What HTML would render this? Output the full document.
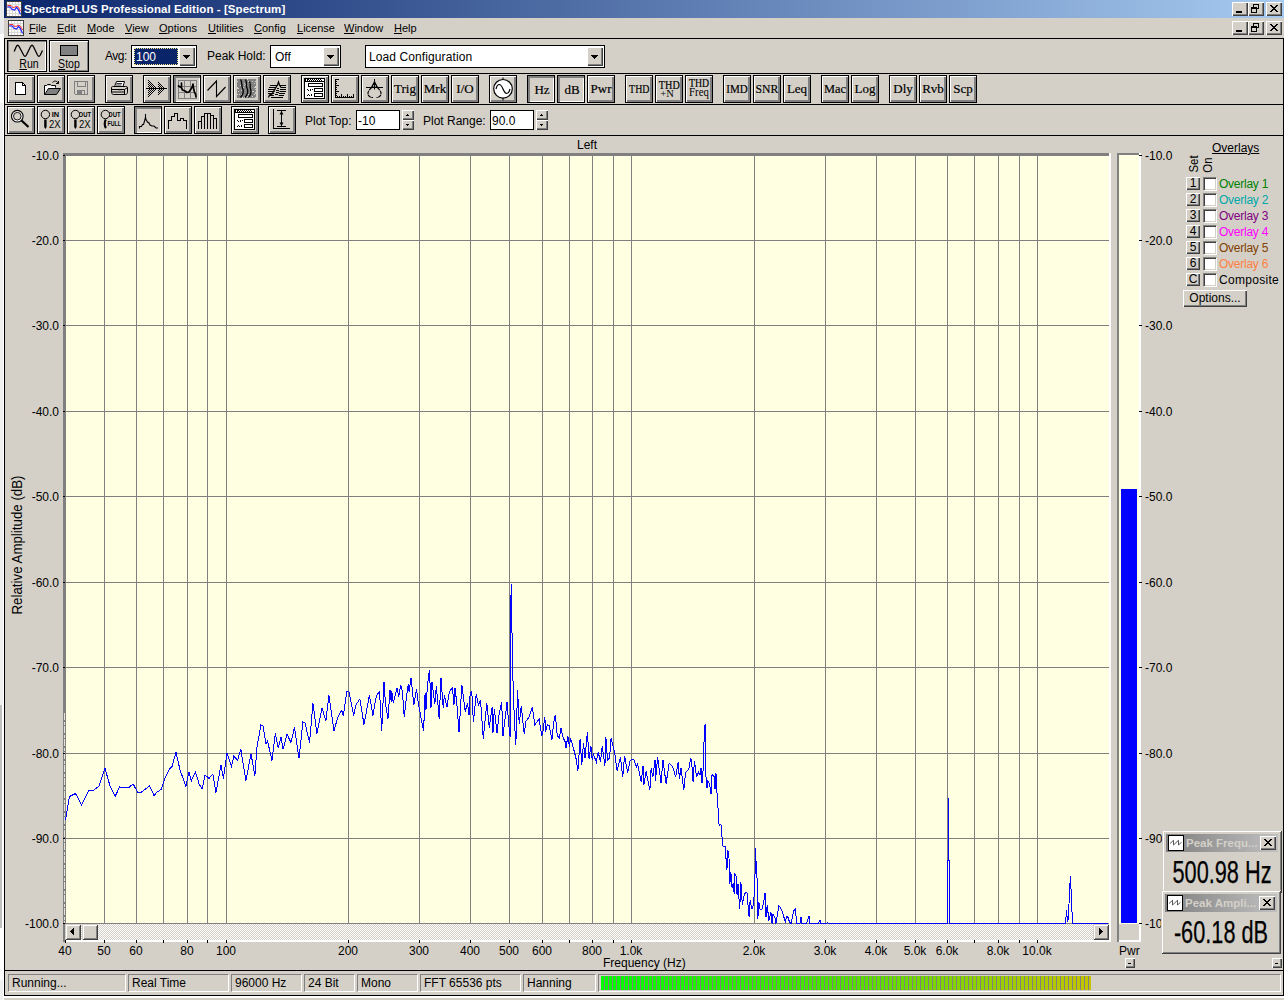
<!DOCTYPE html>
<html lang="en">
<head>
<meta charset="utf-8">
<title>SpectraPLUS Professional Edition - [Spectrum]</title>
<style>
html,body{margin:0;padding:0;}
body{width:1284px;height:1000px;overflow:hidden;background:#fff;font-family:"Liberation Sans",sans-serif;font-size:12px;color:#000;}
#root{position:relative;width:1284px;height:1000px;overflow:hidden;background:#fff;}
#root div,#root span,#root svg{position:absolute;box-sizing:border-box;white-space:nowrap;}
#root u{text-decoration:underline;}
.g{background:#d4d0c8;}
.bl{background:#000;}
/* toolbar buttons */
.tb{width:28px;height:28px;border:1px solid #000;background:#d4d0c8;box-shadow:inset 1px 1px #fff,inset -2px -2px #808080;}
.tb.dn{box-shadow:inset 2px 2px #808080,inset -1px -1px #fff;}
.tb svg{left:-1px;top:-1px;width:28px;height:28px;}
.tb .tx{left:0;top:0;width:26px;height:26px;text-align:center;font-family:"Liberation Serif",serif;font-size:13px;line-height:25px;-webkit-text-stroke:0.2px #000;}
.tb.dn .tx{left:1px;top:1px;}
.tb .tx2{left:0;top:0;width:26px;text-align:center;font-family:"Liberation Serif",serif;font-size:10px;line-height:9px;}
/* captions */
.cap{width:16px;height:14px;background:#d4d0c8;box-shadow:inset 1px 1px #fff,inset -1px -1px #404040,inset -2px -2px #808080;}
.cap svg{left:0;top:0;width:16px;height:14px;}
/* sunken field */
.sunk{background:#fff;border:1px solid #000;}
.dd{width:16px;background:#d4d0c8;box-shadow:inset 1px 1px #fff,inset -1px -1px #404040,inset -2px -2px #808080;}
.lbl{font-size:12px;line-height:14px;}
.sp{background:#d4d0c8;box-shadow:inset 1px 1px #fff,inset -1px -1px #404040,inset -2px -2px #808080;}
.sp.sb{box-shadow:inset 1px 1px #d4d0c8,inset -1px -1px #404040,inset 2px 2px #fff,inset -2px -2px #808080;}
.st{height:18px;top:974px;border:1px solid;border-color:#808080 #fff #fff #808080;font-size:12px;line-height:16px;padding-left:3px;}
.ax{font-size:12px;line-height:12px;}
.ov{font-size:12px;line-height:14px;left:1219px;}
.setb{left:1186px;width:14px;height:13px;background:#d4d0c8;box-shadow:inset 1px 1px #fff,inset -1px -1px #404040,inset -2px -2px #808080;font-size:12px;line-height:12px;text-align:center;}
.chk{left:1203px;width:13px;height:13px;background:#fff;border:1px solid;border-color:#808080 #fff #fff #808080;box-shadow:inset 1px 1px #404040,inset -1px -1px #d4d0c8;}
.m{top:22px;font-size:11px;line-height:13px;}
</style>
</head>
<body>
<div id="root">

<!-- desktop strip at left/bottom -->
<div style="left:0;top:0;width:4px;height:34px;background:#e8eaec"></div>
<div style="left:0;top:103px;width:3px;height:602px;background:#f0f0f0"></div>
<div style="left:0;top:705px;width:2px;height:223px;background:#c0c0c0"></div>
<div style="left:0;top:980px;width:3px;height:20px;background:#f0f0f0"></div>
<div style="left:4px;top:998px;width:1280px;height:2px;background:#d4d0c8"></div>
<!-- window -->
<div class="g" style="left:4px;top:0;width:1280px;height:996px;"></div>
<!-- title bar -->
<div style="left:4px;top:0;width:1280px;height:18px;background:linear-gradient(to right,#0a246a,#a6caf0);"></div>
<svg style="left:6px;top:1px;width:16px;height:16px" viewBox="0 0 16 16"><rect x="0.500" y="0.500" width="15" height="15" fill="#fff" stroke="#404040"/><path d="M3.500 1V15M6.500 1V15M9.500 1V15M12.500 1V15M1 3.500H15M1 6.500H15M1 9.500H15M1 12.500H15" stroke="#d8d8d8" stroke-width="1" fill="none"/><path d="M1.300 4.500H5L6.500 6.500L9 6L11 5L13.500 8L14.500 10" stroke="#ff3030" stroke-width="1" fill="none"/><path d="M1.300 5.800L4.500 6L5.500 8L8.500 9L10.500 6.500L12 8L13.500 11L14.500 13.500" stroke="#2020ff" stroke-width="1.200" fill="none"/></svg>
<div style="left:24px;top:2px;font-size:11.5px;line-height:14px;font-weight:bold;color:#fff;letter-spacing:0.070px" id="ttl">SpectraPLUS Professional Edition - [Spectrum]</div>
<div class="cap" style="left:1232px;top:2px"><svg viewBox="0 0 16 14" shape-rendering="crispEdges"><rect x="4" y="9" width="6" height="2" fill="#000"/></svg></div>
<div class="cap" style="left:1248px;top:2px"><svg viewBox="0 0 16 14" shape-rendering="crispEdges"><path d="M5 2H11V3H5zM5 3H6V5H5zM10 3H11V7H10zM9 6H10V7H9z M3 5H9V7H3z M3 7H4V11H3z M8 7H9V11H8z M3 10H9V11H3z" fill="#000"/></svg></div>
<div class="cap" style="left:1266px;top:2px"><svg viewBox="0 0 16 14" shape-rendering="crispEdges"><path d="M4 3h2v1h1v1h2v-1h1v-1h2v1h-1v1h-1v1h-1v1h1v1h1v1h1v1h-2v-1h-1v-1h-2v1h-1v1h-2v-1h1v-1h1v-1h1v-1h-1v-1h-1v-1h-1z" fill="#000"/></svg></div>
<!-- menu bar -->
<svg style="left:8px;top:20px;width:16px;height:16px" viewBox="0 0 16 16"><rect x="0.500" y="0.500" width="15" height="15" fill="#fff" stroke="#404040"/><path d="M3.500 1V15M6.500 1V15M9.500 1V15M12.500 1V15M1 3.500H15M1 6.500H15M1 9.500H15M1 12.500H15" stroke="#d8d8d8" stroke-width="1" fill="none"/><path d="M1.300 4.500H5L6.500 6.500L9 6L11 5L13.500 8L14.500 10" stroke="#ff3030" stroke-width="1" fill="none"/><path d="M1.300 5.800L4.500 6L5.500 8L8.500 9L10.500 6.500L12 8L13.500 11L14.500 13.500" stroke="#2020ff" stroke-width="1.200" fill="none"/></svg>
<div class="m" style="left:29px"><u>F</u>ile</div>
<div class="m" style="left:57px"><u>E</u>dit</div>
<div class="m" style="left:87px"><u>M</u>ode</div>
<div class="m" style="left:125px"><u>V</u>iew</div>
<div class="m" style="left:159px"><u>O</u>ptions</div>
<div class="m" style="left:208px"><u>U</u>tilities</div>
<div class="m" style="left:254px"><u>C</u>onfig</div>
<div class="m" style="left:297px"><u>L</u>icense</div>
<div class="m" style="left:344px"><u>W</u>indow</div>
<div class="m" style="left:394px"><u>H</u>elp</div>
<div class="cap" style="left:1232px;top:21px"><svg viewBox="0 0 16 14" shape-rendering="crispEdges"><rect x="4" y="9" width="6" height="2" fill="#000"/></svg></div>
<div class="cap" style="left:1248px;top:21px"><svg viewBox="0 0 16 14" shape-rendering="crispEdges"><path d="M5 2H11V3H5zM5 3H6V5H5zM10 3H11V7H10zM9 6H10V7H9z M3 5H9V7H3z M3 7H4V11H3z M8 7H9V11H8z M3 10H9V11H3z" fill="#000"/></svg></div>
<div class="cap" style="left:1266px;top:21px"><svg viewBox="0 0 16 14" shape-rendering="crispEdges"><path d="M4 3h2v1h1v1h2v-1h1v-1h2v1h-1v1h-1v1h-1v1h1v1h1v1h1v1h-2v-1h-1v-1h-2v1h-1v1h-2v-1h1v-1h1v-1h1v-1h-1v-1h-1v-1h-1z" fill="#000"/></svg></div>
<!-- toolbar frames -->
<div class="bl" style="left:4px;top:38px;width:1280px;height:1px"></div>
<div class="bl" style="left:4px;top:73px;width:1280px;height:1px"></div>
<div class="bl" style="left:4px;top:104px;width:1280px;height:1px"></div>
<div class="bl" style="left:4px;top:135px;width:1280px;height:1px"></div>
<div class="bl" style="left:4px;top:38px;width:1px;height:958px"></div>
<div class="bl" style="left:1283px;top:38px;width:1px;height:958px"></div>
<div class="bl" style="left:4px;top:970px;width:1280px;height:1px"></div>
<div class="bl" style="left:4px;top:995px;width:1280px;height:1px"></div>
<!-- row 1 -->
<div class="tb" style="left:7px;top:40px;width:40px;height:32px;box-shadow:inset 1px 1px #808080,inset -1px -1px #fff"><svg style="width:40px;height:32px" viewBox="0 0 40 32"><path d="M7.200 11.500L9.300 6.500Q10.700 4 12.100 6.500L16.600 15Q18 17.600 19.400 15L23.600 6.500Q25 4 26.400 6.500L30.500 15Q31.900 17.600 33.300 15L35.500 10.500" stroke="#000" stroke-width="1.300" fill="none"/></svg><div style="left:2px;top:17px;width:38px;text-align:center;font-size:12px;line-height:13px;transform:scaleX(0.88)"><u>R</u>un</div></div>
<div class="tb" style="left:49px;top:40px;width:40px;height:32px;box-shadow:inset 1px 1px #fff,inset -1px -1px #808080"><div style="left:10px;top:4px;width:18px;height:11px;background:#808080;border:1px solid #000"></div><div style="left:0;top:17px;width:38px;text-align:center;font-size:12px;line-height:13px;transform:scaleX(0.88)"><u>S</u>top</div></div>
<div class="lbl" style="left:105px;top:49px;letter-spacing:-0.5px">Avg:</div>
<div class="sunk" style="left:131px;top:45px;width:66px;height:23px"></div>
<div style="left:134px;top:48px;width:44px;height:17px;background:#0a246a;border:1px dotted #f0e080"></div>
<div class="lbl" style="left:136px;top:50px;color:#fff">100</div>
<div class="dd" style="left:179px;top:47px;height:19px"><svg style="left:0;top:0;width:16px;height:19px" viewBox="0 0 16 19" shape-rendering="crispEdges"><path d="M4 8h7v1h-1v1h-1v1h-1v1h-1v-1h-1v-1h-1v-1h-1z" fill="#000"/></svg></div>
<div class="lbl" style="left:207px;top:49px">Peak Hold:</div>
<div class="sunk" style="left:270px;top:45px;width:71px;height:23px"></div>
<div class="lbl" style="left:275px;top:50px">Off</div>
<div class="dd" style="left:323px;top:47px;height:19px"><svg style="left:0;top:0;width:16px;height:19px" viewBox="0 0 16 19" shape-rendering="crispEdges"><path d="M4 8h7v1h-1v1h-1v1h-1v1h-1v-1h-1v-1h-1v-1h-1z" fill="#000"/></svg></div>
<div class="sunk" style="left:365px;top:45px;width:240px;height:23px"></div>
<div class="lbl" style="left:369px;top:50px;letter-spacing:0.1px">Load Configuration</div>
<div class="dd" style="left:587px;top:47px;height:19px"><svg style="left:0;top:0;width:16px;height:19px" viewBox="0 0 16 19" shape-rendering="crispEdges"><path d="M4 8h7v1h-1v1h-1v1h-1v1h-1v-1h-1v-1h-1v-1h-1z" fill="#000"/></svg></div>

<!-- row 2 -->
<div class="tb" style="left:7px;top:75px"><svg viewBox="0 0 28 28" shape-rendering="crispEdges"><path d="M8.5 7.5H15.5L18.5 10.5V19.5H8.5Z" fill="#fff" stroke="#000"/><path d="M15.5 7.5V10.5H18.5" fill="none" stroke="#000"/></svg></div>
<div class="tb" style="left:37px;top:75px"><svg viewBox="0 0 28 28"><path d="M7.5 19.5V10.5H9.5L10.5 9.5H13.5L14.5 10.5H18.5V12.5" fill="none" stroke="#000"/><path d="M7.5 19.5L11.5 13.5H23.5L19.5 19.5Z" fill="#808080" stroke="#000"/><path d="M8 11H18V13H11L8 18Z" fill="#fff"/><path d="M15.5 7.5C17 5.5 20 5.5 21.5 8.5M21.5 8.5V6M21.5 8.5H19" fill="none" stroke="#000"/></svg></div>
<div class="tb" style="left:67px;top:75px"><svg viewBox="0 0 28 28" shape-rendering="crispEdges"><path d="M7.5 6.5H20.5V19.5H8.5L7.5 18.5Z" fill="#d4d0c8" stroke="#808080"/><path d="M10.5 6.5V11.5H18.5V6.5" fill="none" stroke="#808080"/><rect x="10" y="15" width="8" height="5" fill="#808080"/><rect x="15" y="16" width="2" height="3" fill="#d4d0c8"/></svg></div>
<div class="tb" style="left:105px;top:75px"><svg viewBox="0 0 28 28"><path d="M9.5 11.5L11.5 6.5H19.5L18 11.5" fill="#fff" stroke="#000"/><path d="M11.5 8.5H17M11 10H16.5" stroke="#000" stroke-width="0.8"/><path d="M6.5 12.5C6.5 11.5 7.5 11.5 8.5 11.5H20.5C21.5 11.5 22.5 11.5 22.5 12.5V17.5C22.5 18.5 21.5 19.5 20.5 19.5H8.5C7.5 19.5 6.5 18.5 6.5 17.5Z" fill="#d4d0c8" stroke="#000"/><path d="M6.5 14.5H19.5L22.5 12.5M19.5 14.5V19.5M7 17H19" stroke="#000" fill="none"/><rect x="13" y="15.5" width="4" height="1" fill="#808080"/></svg></div>
<div class="tb" style="left:143px;top:75px"><svg viewBox="0 0 28 28" shape-rendering="crispEdges"><path d="M5 5h1v1h-1zM5 7h1v1h-1zM5 9h1v1h-1zM5 11h1v1h-1zM5 13h1v1h-1zM5 15h1v1h-1zM5 17h1v1h-1zM5 19h1v1h-1zM5 21h1v1h-1zM6 6h1v1h-1zM6 8h1v1h-1zM6 10h1v1h-1zM6 12h1v1h-1zM6 14h1v1h-1zM6 16h1v1h-1zM6 18h1v1h-1zM6 20h1v1h-1zM7 7h1v1h-1zM7 9h1v1h-1zM7 11h1v1h-1zM7 13h1v1h-1zM7 15h1v1h-1zM7 17h1v1h-1zM7 19h1v1h-1zM8 8h1v1h-1zM8 10h1v1h-1zM8 12h1v1h-1zM8 14h1v1h-1zM8 16h1v1h-1zM8 18h1v1h-1zM9 9h1v1h-1zM9 11h1v1h-1zM9 13h1v1h-1zM9 15h1v1h-1zM9 17h1v1h-1zM10 10h1v1h-1zM10 12h1v1h-1zM10 14h1v1h-1zM10 16h1v1h-1zM11 11h1v1h-1zM11 13h1v1h-1zM11 15h1v1h-1zM12 12h1v1h-1zM12 14h1v1h-1zM13 13h1v1h-1zM15 7h1v1h-1zM15 9h1v1h-1zM15 11h1v1h-1zM15 13h1v1h-1zM15 15h1v1h-1zM15 17h1v1h-1zM15 19h1v1h-1zM16 8h1v1h-1zM16 10h1v1h-1zM16 12h1v1h-1zM16 14h1v1h-1zM16 16h1v1h-1zM16 18h1v1h-1zM17 9h1v1h-1zM17 11h1v1h-1zM17 13h1v1h-1zM17 15h1v1h-1zM17 17h1v1h-1zM18 10h1v1h-1zM18 12h1v1h-1zM18 14h1v1h-1zM18 16h1v1h-1zM19 11h1v1h-1zM19 13h1v1h-1zM19 15h1v1h-1zM20 12h1v1h-1zM20 14h1v1h-1zM21 13h1v1h-1z" fill="#000"/><rect x="3" y="13" width="21" height="1" fill="#000"/></svg></div>
<div class="tb dn" style="left:173px;top:75px"><svg viewBox="0 0 28 28"><rect x="5.500" y="5.500" width="18" height="18" fill="none" stroke="#808080"/><path d="M11.500 5.500V23.500M17.500 5.500V23.500M5.500 11.500H23.500M5.500 17.500H23.500" stroke="#808080" fill="none"/><path d="M5 10.500L7 12L8.500 12.500V8V13L9.500 15L12 16L14 17.500L16 17L18 14L19.500 11.500L20 9L20.500 13L21.500 17.500L22.500 19L23 22.500" fill="none" stroke="#000" stroke-width="1.700" stroke-linejoin="round"/></svg></div>
<div class="tb" style="left:203px;top:75px"><svg viewBox="0 0 28 28"><path d="M4.5 15.5L13.5 6V21.5L22.5 12" fill="none" stroke="#000" stroke-width="1.1"/></svg></div>
<div class="tb" style="left:233px;top:75px"><svg viewBox="0 0 28 28"><rect x="4" y="4" width="19" height="19" fill="#808080" shape-rendering="crispEdges"/><path d="M11 22h1v1h-1zM21 8h1v1h-1zM15 19h1v1h-1zM22 6h1v1h-1zM4 19h1v1h-1zM12 21h1v1h-1zM11 10h1v1h-1zM19 21h1v1h-1zM21 19h1v1h-1zM16 8h1v1h-1zM11 8h1v1h-1zM20 16h1v1h-1zM4 6h1v1h-1zM9 22h1v1h-1zM5 13h1v1h-1zM4 12h1v1h-1zM19 16h1v1h-1zM17 16h1v1h-1zM22 18h1v1h-1zM8 15h1v1h-1zM7 5h1v1h-1zM8 19h1v1h-1zM10 12h1v1h-1zM17 13h1v1h-1zM17 20h1v1h-1zM16 22h1v1h-1zM15 21h1v1h-1zM22 17h1v1h-1zM22 11h1v1h-1zM14 4h1v1h-1zM12 9h1v1h-1zM14 21h1v1h-1zM22 22h1v1h-1zM7 10h1v1h-1zM22 12h1v1h-1zM13 7h1v1h-1zM6 19h1v1h-1zM19 6h1v1h-1zM15 6h1v1h-1zM17 8h1v1h-1zM4 13h1v1h-1zM17 17h1v1h-1zM7 5h1v1h-1zM5 16h1v1h-1zM22 14h1v1h-1zM21 12h1v1h-1z" fill="#d4d0c8" shape-rendering="crispEdges"/><path d="M7.500 4.500C10 8 8 10 9.500 13C11 16 10.500 19 7.500 22.500M12.500 4.500C14.500 8 12.500 10 14 13C15.500 16 15 19 12 22.500M16.500 6.500C18 9 16.500 11 17.500 14C18.500 17 18 20 15.500 22.500" fill="none" stroke="#000" stroke-width="1.300"/></svg></div>
<div class="tb" style="left:263px;top:75px"><svg viewBox="0 0 28 28"><path d="M7 10.500H23M6 12.500H23M5 14.500H23M5 16.500H22.500M5 18.500H21.500M6.500 20.500H20.500M8 22.500H19.500" stroke="#000" fill="none" shape-rendering="crispEdges"/><path d="M10.500 22L11.500 17L13 13L14.500 10L15.500 7L16.500 10L17.500 12L16.800 15L16 18L15.500 21.500Z" fill="#d4d0c8"/><path d="M5.500 22.500L6.500 20L9 19L10.500 16.500L12.500 13L14.500 10L15.500 7L16.500 10L17.800 12" fill="none" stroke="#000" stroke-width="1.300"/><path d="M12 19.500H15M12.500 17.500H15.500M13 15.500H16M14 13.500H16" stroke="#000" stroke-width="1" fill="none" shape-rendering="crispEdges"/></svg></div>
<div class="tb" style="left:301px;top:75px"><svg viewBox="0 0 28 28" shape-rendering="crispEdges"><rect x="3" y="3" width="21" height="21" fill="#000"/><rect x="4" y="7" width="19" height="16" fill="#fff"/><rect x="5" y="4" width="1" height="2" fill="#fff"/><rect x="21" y="4" width="2" height="2" fill="#fff"/><path d="M7 5h1v1h-1zM8 4h1v1h-1zM9 5h1v1h-1zM10 4h1v1h-1zM11 5h1v1h-1zM12 4h1v1h-1zM13 5h1v1h-1zM14 4h1v1h-1zM15 5h1v1h-1zM16 4h1v1h-1zM17 5h1v1h-1zM18 4h1v1h-1zM19 5h1v1h-1zM20 4h1v1h-1z" fill="#fff"/><rect x="4" y="7" width="19" height="1" fill="#fff"/><rect x="4" y="7" width="19" height="0" fill="#000"/><rect x="7" y="8" width="15" height="4" fill="#000"/><rect x="8" y="9" width="13" height="2" fill="#fff"/><rect x="13" y="13" width="9" height="4" fill="#000"/><rect x="14" y="14" width="7" height="2" fill="#fff"/><rect x="13" y="18" width="9" height="4" fill="#000"/><rect x="14" y="19" width="7" height="2" fill="#fff"/><path d="M6 14h1v1h1v1h-1v-1h-1zM9 14h1v2h-1zM11 14h1v1h-1zM6 20h1v-1h1v1h1v1h-1v-1h-1v1h-1zM10 19h1v2h-1z" fill="#000"/></svg></div>
<div class="tb" style="left:331px;top:75px"><svg viewBox="0 0 28 28" shape-rendering="crispEdges"><rect x="4" y="4" width="1" height="19" fill="#000"/><rect x="4" y="22" width="19" height="1" fill="#000"/><rect x="4" y="4" width="4" height="1" fill="#000"/><rect x="4" y="6" width="2" height="1" fill="#000"/><rect x="4" y="8" width="2" height="1" fill="#000"/><rect x="4" y="10" width="4" height="1" fill="#000"/><rect x="4" y="12" width="2" height="1" fill="#000"/><rect x="4" y="14" width="2" height="1" fill="#000"/><rect x="4" y="16" width="4" height="1" fill="#000"/><rect x="4" y="18" width="2" height="1" fill="#000"/><rect x="4" y="20" width="2" height="1" fill="#000"/><rect x="6" y="21" width="1" height="2" fill="#000"/><rect x="8" y="21" width="1" height="2" fill="#000"/><rect x="10" y="19" width="1" height="4" fill="#000"/><rect x="12" y="21" width="1" height="2" fill="#000"/><rect x="14" y="21" width="1" height="2" fill="#000"/><rect x="16" y="19" width="1" height="4" fill="#000"/><rect x="18" y="21" width="1" height="2" fill="#000"/><rect x="20" y="21" width="1" height="2" fill="#000"/><rect x="22" y="19" width="1" height="4" fill="#000"/></svg></div>
<div class="tb" style="left:361px;top:75px"><svg viewBox="0 0 28 28"><path d="M13.500 4V14.500M5 12.500H22" fill="none" stroke="#000" stroke-width="1"/><path d="M13.500 5.500L9.800 12.500H17.200Z" fill="#000"/><rect x="12.100" y="10" width="0.800" height="1.800" fill="#d4d0c8"/><rect x="14.100" y="10" width="0.800" height="1.800" fill="#d4d0c8"/><path d="M10.500 12.500L8 15.500C6.500 17.500 6.500 20 8.500 21.500L10 22.500H12" fill="none" stroke="#000" stroke-width="1.200" stroke-dasharray="3.500 0.700"/><path d="M16.500 12.500L19 15.500C20.500 17.500 20.500 20 18.500 21.500L17 22.500H15.500" fill="none" stroke="#000" stroke-width="1.200" stroke-dasharray="3.500 0.700"/></svg></div>
<div class="tb" style="left:391px;top:75px"><div class="tx">Trig</div></div>
<div class="tb" style="left:421px;top:75px"><div class="tx">Mrk</div></div>
<div class="tb" style="left:451px;top:75px"><div class="tx">I/O</div></div>
<div class="tb" style="left:489px;top:75px"><svg viewBox="0 0 28 28"><path d="M14 2.500V5M14 22.500V25.500" stroke="#000"/><circle cx="14" cy="13.800" r="9.300" fill="#fff" stroke="#000" stroke-width="1.200"/><path d="M7 14C8.500 8 11.500 8 14 14C16.500 20 19.500 20 21 14" fill="none" stroke="#000" stroke-width="1.200"/></svg></div>
<div class="tb dn" style="left:527px;top:75px"><div class="tx">Hz</div></div>
<div class="tb dn" style="left:557px;top:75px"><div class="tx">dB</div></div>
<div class="tb" style="left:587px;top:75px"><div class="tx">Pwr</div></div>
<div class="tb" style="left:625px;top:75px"><div class="tx" style="transform:scaleX(0.76);-webkit-text-stroke:0.2px #000">THD</div></div>
<div class="tb" style="left:655px;top:75px"><div class="tx2" style="top:2px;font-size:13px;line-height:13px;transform:scaleX(0.78);-webkit-text-stroke:0.2px #000">THD</div><div class="tx2" style="left:-2px;top:13px;font-size:10.5px;line-height:10px">+N</div></div>
<div class="tb" style="left:685px;top:75px"><div class="tx2" style="top:1px;font-size:11.5px;line-height:12px;transform:scaleX(0.85);-webkit-text-stroke:0.2px #000">THD</div><div class="tx2" style="top:10px;font-size:12px;line-height:13px;transform:scaleX(0.9)">Freq</div></div>
<div class="tb" style="left:723px;top:75px"><div class="tx" style="transform:scaleX(0.85);-webkit-text-stroke:0.2px #000">IMD</div></div>
<div class="tb" style="left:753px;top:75px"><div class="tx" style="transform:scaleX(0.9);-webkit-text-stroke:0.2px #000">SNR</div></div>
<div class="tb" style="left:783px;top:75px"><div class="tx">Leq</div></div>
<div class="tb" style="left:821px;top:75px"><div class="tx" style="transform:scaleX(0.95);-webkit-text-stroke:0.2px #000">Mac</div></div>
<div class="tb" style="left:851px;top:75px"><div class="tx">Log</div></div>
<div class="tb" style="left:889px;top:75px"><div class="tx">Dly</div></div>
<div class="tb" style="left:919px;top:75px"><div class="tx">Rvb</div></div>
<div class="tb" style="left:949px;top:75px"><div class="tx">Scp</div></div>
<!-- row 3 -->
<div class="tb" style="left:7px;top:106px"><svg viewBox="0 0 28 28"><circle cx="10.300" cy="10.200" r="5.800" fill="#fff" stroke="#000" stroke-width="1.100"/><circle cx="10.300" cy="10.200" r="3.800" fill="#d4d0c8" stroke="#000" stroke-width="0.900"/><path d="M14.500 14.500L21.500 21" stroke="#000" stroke-width="2.200"/></svg></div>
<div class="tb" style="left:37px;top:106px"><svg viewBox="0 0 28 28"><text x="18.400" y="10.800" font-family="Liberation Sans,sans-serif" font-size="7" font-weight="bold" text-anchor="middle" textLength="7.400" lengthAdjust="spacingAndGlyphs">IN</text><circle cx="8.400" cy="8.500" r="4.200" fill="#d4d0c8" stroke="#000" stroke-width="1"/><path d="M7.200 13.500H9.600V21L8.400 23L7.200 21Z" fill="#000"/><text x="17.800" y="22.100" font-family="Liberation Sans,sans-serif" font-size="10.800" text-anchor="middle" textLength="11.600" lengthAdjust="spacingAndGlyphs">2X</text></svg></div>
<div class="tb" style="left:67px;top:106px"><svg viewBox="0 0 28 28"><text x="17.800" y="10.800" font-family="Liberation Sans,sans-serif" font-size="7" font-weight="bold" text-anchor="middle" textLength="12.500" lengthAdjust="spacingAndGlyphs">OUT</text><circle cx="8.400" cy="8.500" r="4.200" fill="#d4d0c8" stroke="#000" stroke-width="1"/><path d="M7.200 13.500H9.600V21L8.400 23L7.200 21Z" fill="#000"/><text x="17.800" y="22.100" font-family="Liberation Sans,sans-serif" font-size="10.800" text-anchor="middle" textLength="11.600" lengthAdjust="spacingAndGlyphs">2X</text></svg></div>
<div class="tb" style="left:97px;top:106px"><svg viewBox="0 0 28 28"><text x="17.300" y="10.800" font-family="Liberation Sans,sans-serif" font-size="7" font-weight="bold" text-anchor="middle" textLength="12.500" lengthAdjust="spacingAndGlyphs">OUT</text><circle cx="8.400" cy="8.500" r="4.200" fill="#d4d0c8" stroke="#000" stroke-width="1"/><path d="M8.800 13.500C7.200 16 7.500 20 9 22" stroke="#000" stroke-width="2.200" fill="none"/><text x="17.200" y="19.700" font-family="Liberation Sans,sans-serif" font-size="6.500" font-weight="bold" text-anchor="middle" textLength="13.500" lengthAdjust="spacingAndGlyphs">FULL</text></svg></div>
<div class="tb dn" style="left:134px;top:106px"><svg viewBox="0 0 28 28"><path d="M5.500 22.500V20.500H7.500L8.500 18.500H9.500L11 13.500L11.500 11V8V11L12 13.500L13.500 16L15 17L16 19L18 20H20L22 22H24" fill="none" stroke="#000" stroke-width="1.100"/></svg></div>
<div class="tb" style="left:164px;top:106px"><svg viewBox="0 0 28 28" shape-rendering="crispEdges"><path d="M4.500 23V14.500H7.500V10.500H10.500V7.500H13.500V14.500H16.500V12.500H19.500V14.500H22.500V23" fill="none" stroke="#000"/></svg></div>
<div class="tb" style="left:194px;top:106px"><svg viewBox="0 0 28 28" shape-rendering="crispEdges"><path d="M4.500 23V15.500H7.500V23M7.500 15.500V10.500H10.500V23M10.500 10.500V7.500H13.500V23M13.500 7.500H16.500V23M16.500 9.500H19.500V23M19.500 12.500H22.500V23" fill="none" stroke="#000"/></svg></div>
<div class="tb" style="left:231px;top:106px"><svg viewBox="0 0 28 28" shape-rendering="crispEdges"><rect x="3" y="3" width="21" height="21" fill="#000"/><rect x="4" y="7" width="19" height="16" fill="#fff"/><rect x="5" y="4" width="1" height="2" fill="#fff"/><rect x="21" y="4" width="2" height="2" fill="#fff"/><path d="M7 5h1v1h-1zM8 4h1v1h-1zM9 5h1v1h-1zM10 4h1v1h-1zM11 5h1v1h-1zM12 4h1v1h-1zM13 5h1v1h-1zM14 4h1v1h-1zM15 5h1v1h-1zM16 4h1v1h-1zM17 5h1v1h-1zM18 4h1v1h-1zM19 5h1v1h-1zM20 4h1v1h-1z" fill="#fff"/><rect x="4" y="7" width="19" height="1" fill="#fff"/><rect x="4" y="7" width="19" height="0" fill="#000"/><rect x="7" y="8" width="15" height="4" fill="#000"/><rect x="8" y="9" width="13" height="2" fill="#fff"/><rect x="13" y="13" width="9" height="4" fill="#000"/><rect x="14" y="14" width="7" height="2" fill="#fff"/><rect x="13" y="18" width="9" height="4" fill="#000"/><rect x="14" y="19" width="7" height="2" fill="#fff"/><path d="M6 14h1v1h1v1h-1v-1h-1zM9 14h1v2h-1zM11 14h1v1h-1zM6 20h1v-1h1v1h1v1h-1v-1h-1v1h-1zM10 19h1v2h-1z" fill="#000"/></svg></div>
<div class="tb" style="left:268px;top:106px"><svg viewBox="0 0 28 28" shape-rendering="crispEdges"><path d="M5.500 3V22.500H22" fill="none" stroke="#000"/><path d="M9 4.500H18M9 20.500H18M13.500 5V20" fill="none" stroke="#000"/><path d="M13.500 5L11.500 8.500H15.500ZM13.500 20L11.500 16.500H15.500Z" fill="#000" shape-rendering="auto"/></svg></div>
<div class="lbl" style="left:305px;top:114px">Plot Top:</div>
<div class="sunk" style="left:356px;top:110px;width:44px;height:20px"></div><div class="lbl" style="left:358px;top:114px">-10</div>
<div class="sp" style="left:402px;top:110px;width:12px;height:10px"><svg style="left:0;top:0;width:12px;height:10px" viewBox="0 0 12 10" shape-rendering="crispEdges"><path d="M5 4h1v1h1v1h-3v-1h1z" fill="#000"/></svg></div><div class="sp" style="left:402px;top:120px;width:12px;height:10px"><svg style="left:0;top:0;width:12px;height:10px" viewBox="0 0 12 10" shape-rendering="crispEdges"><path d="M4 4h3v1h-1v1h-1v-1h-1z" fill="#000"/></svg></div>
<div class="lbl" style="left:423px;top:114px">Plot Range:</div>
<div class="sunk" style="left:490px;top:110px;width:44px;height:20px"></div><div class="lbl" style="left:492px;top:114px">90.0</div>
<div class="sp" style="left:536px;top:110px;width:12px;height:10px"><svg style="left:0;top:0;width:12px;height:10px" viewBox="0 0 12 10" shape-rendering="crispEdges"><path d="M5 4h1v1h1v1h-3v-1h1z" fill="#000"/></svg></div><div class="sp" style="left:536px;top:120px;width:12px;height:10px"><svg style="left:0;top:0;width:12px;height:10px" viewBox="0 0 12 10" shape-rendering="crispEdges"><path d="M4 4h3v1h-1v1h-1v-1h-1z" fill="#000"/></svg></div>
<!-- plot -->
<div class="lbl" style="left:577px;top:138px">Left</div>
<div style="left:63px;top:153px;width:1048px;height:789px;background:#fff"></div>
<div style="left:63px;top:153px;width:1046px;height:787px;background:#808080"></div>
<div style="left:63px;top:940px;width:2px;height:2px;background:#808080"></div>
<div style="left:65px;top:155px;width:1044px;height:769px;background:#ffffe1"></div>
<svg style="left:0;top:0;width:1284px;height:1000px" viewBox="0 0 1284 1000"><path d="M65.5 155V924M104.5 155V924M136.5 155V924M163.5 155V924M187.5 155V924M207.5 155V924M226.5 155V924M348.5 155V924M419.5 155V924M470.5 155V924M509.5 155V924M542.5 155V924M569.5 155V924M592.5 155V924M613.5 155V924M631.5 155V924M754.5 155V924M825.5 155V924M876.5 155V924M915.5 155V924M947.5 155V924M974.5 155V924M998.5 155V924M1019.5 155V924M1037.5 155V924M65 155.5H1109M65 240.5H1109M65 325.5H1109M65 411.5H1109M65 496.5H1109M65 582.5H1109M65 667.5H1109M65 753.5H1109M65 838.5H1109M65 923.5H1109" stroke="#808080" stroke-width="1" fill="none" shape-rendering="crispEdges"/><polyline points="65.0,819.4 69.0,796.0 75.0,793.0 81.0,804.4 88.5,790.0 93.0,790.0 98.4,785.5 104.4,767.5 109.5,785.5 114.6,796.0 119.1,786.4 123.0,787.0 128.4,787.0 132.6,783.4 137.4,792.4 141.0,791.5 149.1,785.5 153.6,795.1 156.6,791.5 160.5,789.1 165.0,776.5 168.6,769.0 171.6,766.0 175.5,751.6 179.4,769.0 185.4,786.1 188.4,771.4 190.8,780.4 195.0,771.4 198.6,783.4 201.6,788.5 204.6,774.4 208.5,778.0 212.4,773.5 215.4,792.4 220.5,764.5 222.9,778.0 226.5,752.5 231.0,766.0 233.4,755.5 237.0,760.0 240.3,748.6 245.4,780.4 250.5,753.4 254.4,775.0 256.5,746.5 260.4,724.6 262.5,725.5 265.5,743.5 267.0,740.5 271.5,760.0 274.8,733.0 277.8,747.4 280.5,736.6 282.6,748.6 286.5,733.6 290.4,742.0 294.0,727.0 298.5,757.9 302.4,721.6 304.5,722.5 309.0,742.0 312.5,703.0 316.4,733.0 321.5,707.5 325.4,720.4 328.4,694.6 333.5,730.0 337.4,716.5 341.3,709.6 342.8,715.0 346.4,691.0 348.5,691.6 353.3,715.0 355.4,704.5 359.3,698.5 363.5,724.0 368.9,694.6 372.5,715.0 374.9,700.0 376.0,694.9 379.1,691.1 381.2,730.4 383.5,681.8 385.0,703.6 387.5,718.3 389.5,689.9 390.7,701.1 391.2,690.5 392.8,702.3 396.6,687.4 398.2,696.1 400.3,684.6 401.9,691.1 403.7,716.0 405.9,697.4 407.8,683.6 408.6,691.1 410.5,677.4 413.4,704.2 416.1,688.6 417.7,702.3 419.6,712.3 423.1,730.4 424.6,693.0 425.5,709.2 426.8,686.1 429.0,669.3 430.5,707.3 431.5,681.8 434.3,703.6 435.8,685.5 438.7,718.3 440.5,677.4 442.7,707.3 443.9,694.9 446.4,706.7 448.9,691.1 452.0,687.4 453.5,704.2 454.5,687.4 456.4,703.6 458.5,731.6 461.4,684.3 464.7,711.1 467.0,702.3 468.5,714.8 469.7,691.7 471.3,691.1 472.9,721.7 475.7,693.6 477.9,704.8 480.0,699.8 482.8,738.2 486.3,702.3 488.8,727.3 491.6,706.7 492.5,732.2 493.8,708.6 496.5,732.2 498.7,712.9 501.2,701.7 502.5,735.4 506.5,701.7 508.8,729.8 509.6,736.6 509.7,687.4 510.0,660.0 510.6,584.0 511.6,637.5 512.3,679.9 513.1,681.2 513.6,714.8 515.3,744.5 517.1,689.6 518.7,723.5 520.8,705.5 523.7,733.5 525.5,720.4 528.3,717.3 531.8,706.7 534.3,724.1 538.7,718.6 541.2,735.5 542.5,730.5 544.3,716.4 545.2,731.1 546.8,724.2 548.7,724.9 551.4,739.6 553.1,722.4 554.9,714.3 556.8,735.5 558.9,737.3 560.5,727.4 562.6,737.3 564.6,741.1 565.5,747.3 567.4,735.5 568.9,746.0 570.1,737.6 573.0,747.9 575.5,757.9 577.4,770.3 579.6,738.3 581.3,764.5 583.0,742.3 584.5,757.3 586.9,731.1 588.6,758.5 590.4,745.4 591.7,759.8 592.9,753.5 595.8,761.6 597.7,751.7 600.0,761.0 601.7,745.4 604.4,765.4 605.4,736.7 607.0,759.8 609.1,757.3 610.6,737.3 614.1,751.7 616.6,770.3 620.0,756.6 622.2,776.6 624.1,755.4 627.2,772.2 629.7,759.8 633.2,758.5 635.9,767.2 636.9,762.2 640.7,781.6 642.5,765.7 643.4,784.4 645.6,770.7 649.4,789.4 650.6,767.9 652.4,776.6 654.6,759.1 655.0,780.3 657.1,756.3 660.5,782.4 662.5,759.5 665.6,783.4 668.6,762.5 672.1,766.0 675.2,776.6 677.7,761.6 678.9,778.4 680.5,767.9 683.3,789.4 685.1,771.6 688.3,769.1 690.0,758.5 690.9,758.6 692.6,781.7 693.9,760.5 696.1,776.7 698.0,771.7 699.6,774.2 700.6,767.1 701.5,782.9 703.0,764.8 703.6,737.4 704.6,723.1 705.1,744.3 705.5,776.1 706.4,787.9 707.4,780.4 709.2,784.2 710.5,793.5 711.5,774.2 713.6,776.1 714.5,788.5 715.5,772.9 716.1,787.3 717.1,801.0 717.9,814.1 718.6,825.3 720.4,823.4 721.7,838.4 722.6,846.3 724.6,846.3 725.8,861.7 726.4,869.3 727.5,850.0 728.5,857.6 729.3,883.3 730.4,871.7 731.6,887.4 732.8,882.8 733.7,893.3 734.5,873.4 735.5,875.2 736.6,894.4 737.5,883.3 739.2,908.5 740.4,881.4 741.8,904.4 743.9,893.5 746.4,891.5 748.6,916.4 749.7,899.1 751.1,908.2 752.3,907.9 754.2,889.8 754.7,864.1 755.3,847.1 755.8,876.9 756.5,876.9 757.3,918.4 758.5,902.0 759.6,909.0 761.4,909.0 763.7,899.1 764.6,892.1 765.5,916.6 766.7,904.4 768.4,920.1 770.5,912.0 771.6,923.0 772.5,913.7 774.5,917.8 775.4,923.0 778.3,905.5 780.1,907.3 782.2,912.5 784.8,921.3 786.2,916.4 787.3,916.4 789.2,921.9 790.6,923.0 793.2,910.2 794.7,908.5 796.4,923.0 799.4,923.0 800.5,916.4 801.4,923.0 806.0,923.0 808.5,915.2 809.3,923.0 818.1,923.0 819.5,919.3 820.4,923.0 825.7,923.0 826.8,922.2 828.0,923.0 946.0,923.0 947.0,923.0 947.0,860.0 948.0,860.0 948.0,797.0 948.0,860.0 949.0,860.0 949.0,923.0 950.0,923.0 1064.0,923.0 1065.0,923.0 1066.0,910.0 1067.0,921.0 1068.0,917.0 1069.0,890.0 1070.0,876.0 1071.0,900.0 1072.0,923.0 1073.0,923.0 1107.0,923.0" fill="none" stroke="#0000ff" stroke-width="1" shape-rendering="crispEdges" transform="translate(0.5,0.5)"/></svg>
<div style="left:64px;top:713px;width:1px;height:210px;background:repeating-linear-gradient(to bottom,#e4e4dc 0 7px,#808080 7px 9px,#e4e4dc 9px 12px,#808080 12px 13px)"></div>
<div style="left:65px;top:924px;width:1044px;height:16px;background:#d4d0c8;background-image:conic-gradient(#fff 25%,#d4d0c8 0 50%,#fff 0 75%,#d4d0c8 0);background-size:2px 2px"></div>
<div class="sp sb" style="left:65px;top:924px;width:16px;height:16px"><svg style="left:0;top:0;width:16px;height:16px" viewBox="0 0 16 16" shape-rendering="crispEdges"><path d="M8 4h1v7h-1zM7 5h1v5h-1zM6 6h1v3h-1zM5 7h1v1h-1z" fill="#000"/></svg></div>
<div class="sp sb" style="left:82px;top:924px;width:16px;height:16px"></div>
<div class="sp sb" style="left:1093px;top:924px;width:16px;height:16px"><svg style="left:0;top:0;width:16px;height:16px" viewBox="0 0 16 16" shape-rendering="crispEdges"><path d="M6 4h1v7h-1zM7 5h1v5h-1zM8 6h1v3h-1zM9 7h1v1h-1z" fill="#000"/></svg></div>
<div class="ax" style="left:0;width:59px;text-align:right;top:150px">-10.0</div>
<div class="bl" style="left:63px;top:155px;width:2px;height:1px"></div>
<div class="ax" style="left:0;width:59px;text-align:right;top:235px">-20.0</div>
<div class="bl" style="left:63px;top:240px;width:2px;height:1px"></div>
<div class="ax" style="left:0;width:59px;text-align:right;top:320px">-30.0</div>
<div class="bl" style="left:63px;top:325px;width:2px;height:1px"></div>
<div class="ax" style="left:0;width:59px;text-align:right;top:406px">-40.0</div>
<div class="bl" style="left:63px;top:411px;width:2px;height:1px"></div>
<div class="ax" style="left:0;width:59px;text-align:right;top:491px">-50.0</div>
<div class="bl" style="left:63px;top:496px;width:2px;height:1px"></div>
<div class="ax" style="left:0;width:59px;text-align:right;top:577px">-60.0</div>
<div class="bl" style="left:63px;top:582px;width:2px;height:1px"></div>
<div class="ax" style="left:0;width:59px;text-align:right;top:662px">-70.0</div>
<div class="bl" style="left:63px;top:667px;width:2px;height:1px"></div>
<div class="ax" style="left:0;width:59px;text-align:right;top:748px">-80.0</div>
<div class="bl" style="left:63px;top:753px;width:2px;height:1px"></div>
<div class="ax" style="left:0;width:59px;text-align:right;top:833px">-90.0</div>
<div class="bl" style="left:63px;top:838px;width:2px;height:1px"></div>
<div class="ax" style="left:0;width:59px;text-align:right;top:918px">-100.0</div>
<div class="bl" style="left:63px;top:923px;width:2px;height:1px"></div>
<div style="left:17px;top:545px;width:0;height:0"><div id="ylab" style="left:-80px;top:-8px;width:160px;height:16px;text-align:center;font-size:14.5px;line-height:16px;transform:rotate(-90deg) scaleX(0.918)">Relative Amplitude (dB)</div></div>
<div style="left:65px;top:940px;width:1px;height:3px;background:#000"></div>
<div class="ax" style="left:35px;top:945px;width:60px;text-align:center">40</div>
<div style="left:104px;top:940px;width:1px;height:3px;background:#000"></div>
<div class="ax" style="left:74px;top:945px;width:60px;text-align:center">50</div>
<div style="left:136px;top:940px;width:1px;height:3px;background:#000"></div>
<div class="ax" style="left:106px;top:945px;width:60px;text-align:center">60</div>
<div style="left:163px;top:940px;width:1px;height:3px;background:#000"></div>
<div style="left:187px;top:940px;width:1px;height:3px;background:#000"></div>
<div class="ax" style="left:157px;top:945px;width:60px;text-align:center">80</div>
<div style="left:207px;top:940px;width:1px;height:3px;background:#000"></div>
<div style="left:226px;top:940px;width:1px;height:3px;background:#000"></div>
<div class="ax" style="left:196px;top:945px;width:60px;text-align:center">100</div>
<div style="left:348px;top:940px;width:1px;height:3px;background:#000"></div>
<div class="ax" style="left:318px;top:945px;width:60px;text-align:center">200</div>
<div style="left:419px;top:940px;width:1px;height:3px;background:#000"></div>
<div class="ax" style="left:389px;top:945px;width:60px;text-align:center">300</div>
<div style="left:470px;top:940px;width:1px;height:3px;background:#000"></div>
<div class="ax" style="left:440px;top:945px;width:60px;text-align:center">400</div>
<div style="left:509px;top:940px;width:1px;height:3px;background:#000"></div>
<div class="ax" style="left:479px;top:945px;width:60px;text-align:center">500</div>
<div style="left:542px;top:940px;width:1px;height:3px;background:#000"></div>
<div class="ax" style="left:512px;top:945px;width:60px;text-align:center">600</div>
<div style="left:569px;top:940px;width:1px;height:3px;background:#000"></div>
<div style="left:592px;top:940px;width:1px;height:3px;background:#000"></div>
<div class="ax" style="left:562px;top:945px;width:60px;text-align:center">800</div>
<div style="left:613px;top:940px;width:1px;height:3px;background:#000"></div>
<div style="left:631px;top:940px;width:1px;height:3px;background:#000"></div>
<div class="ax" style="left:601px;top:945px;width:60px;text-align:center">1.0k</div>
<div style="left:754px;top:940px;width:1px;height:3px;background:#000"></div>
<div class="ax" style="left:724px;top:945px;width:60px;text-align:center">2.0k</div>
<div style="left:825px;top:940px;width:1px;height:3px;background:#000"></div>
<div class="ax" style="left:795px;top:945px;width:60px;text-align:center">3.0k</div>
<div style="left:876px;top:940px;width:1px;height:3px;background:#000"></div>
<div class="ax" style="left:846px;top:945px;width:60px;text-align:center">4.0k</div>
<div style="left:915px;top:940px;width:1px;height:3px;background:#000"></div>
<div class="ax" style="left:885px;top:945px;width:60px;text-align:center">5.0k</div>
<div style="left:947px;top:940px;width:1px;height:3px;background:#000"></div>
<div class="ax" style="left:917px;top:945px;width:60px;text-align:center">6.0k</div>
<div style="left:974px;top:940px;width:1px;height:3px;background:#000"></div>
<div style="left:998px;top:940px;width:1px;height:3px;background:#000"></div>
<div class="ax" style="left:968px;top:945px;width:60px;text-align:center">8.0k</div>
<div style="left:1019px;top:940px;width:1px;height:3px;background:#000"></div>
<div style="left:1037px;top:940px;width:1px;height:3px;background:#000"></div>
<div class="ax" style="left:1007px;top:945px;width:60px;text-align:center">10.0k</div>
<div class="lbl" style="left:603px;top:956px">Frequency (Hz)</div>
<div style="left:1117px;top:153px;width:24px;height:789px;background:#fff"></div>
<div style="left:1117px;top:153px;width:22px;height:787px;background:#808080"></div>
<div style="left:1117px;top:940px;width:2px;height:2px;background:#808080"></div>
<div style="left:1119px;top:155px;width:20px;height:769px;background:#ffffe1"></div>
<div style="left:1119px;top:924px;width:20px;height:16px;background:#d4d0c8"></div>
<div style="left:1121px;top:489px;width:16px;height:434px;background:#0000ff"></div>
<div class="ax" style="left:1145px;top:150px">-10.0</div>
<div class="bl" style="left:1139px;top:155px;width:3px;height:1px"></div>
<div class="ax" style="left:1145px;top:235px">-20.0</div>
<div class="bl" style="left:1139px;top:240px;width:3px;height:1px"></div>
<div class="ax" style="left:1145px;top:320px">-30.0</div>
<div class="bl" style="left:1139px;top:325px;width:3px;height:1px"></div>
<div class="ax" style="left:1145px;top:406px">-40.0</div>
<div class="bl" style="left:1139px;top:411px;width:3px;height:1px"></div>
<div class="ax" style="left:1145px;top:491px">-50.0</div>
<div class="bl" style="left:1139px;top:496px;width:3px;height:1px"></div>
<div class="ax" style="left:1145px;top:577px">-60.0</div>
<div class="bl" style="left:1139px;top:582px;width:3px;height:1px"></div>
<div class="ax" style="left:1145px;top:662px">-70.0</div>
<div class="bl" style="left:1139px;top:667px;width:3px;height:1px"></div>
<div class="ax" style="left:1145px;top:748px">-80.0</div>
<div class="bl" style="left:1139px;top:753px;width:3px;height:1px"></div>
<div class="ax" style="left:1145px;top:833px">-90.0</div>
<div class="bl" style="left:1139px;top:838px;width:3px;height:1px"></div>
<div class="ax" style="left:1145px;top:918px">-100.0</div>
<div class="bl" style="left:1139px;top:923px;width:3px;height:1px"></div>
<div class="lbl" style="left:1119px;top:944px">Pwr</div>
<div class="sp" style="left:1125px;top:958px;width:10px;height:10px"><div style="left:3px;top:5px;width:3px;height:1px;background:#000"></div></div>
<div class="sp" style="left:1272px;top:958px;width:10px;height:10px"><div style="left:3px;top:5px;width:3px;height:1px;background:#000"></div></div>
<!-- overlays panel -->
<div class="lbl" style="left:1212px;top:141px;text-decoration:underline">Overlays</div>
<div style="left:1194px;top:164px;width:0;height:0"><div style="left:-15px;top:-8px;width:30px;height:16px;text-align:center;font-size:13px;line-height:16px;transform:rotate(-90deg) scaleX(0.88)">Set</div></div>
<div style="left:1208px;top:165px;width:0;height:0"><div style="left:-15px;top:-8px;width:30px;height:16px;text-align:center;font-size:13px;line-height:16px;transform:rotate(-90deg) scaleX(0.88)">On</div></div>
<div class="setb" style="top:177px">1</div>
<div class="chk" style="top:177px;width:14px;height:14px"></div>
<div class="ov" style="top:177px;color:#008000;letter-spacing:-0.25px">Overlay 1</div>
<div class="setb" style="top:193px">2</div>
<div class="chk" style="top:193px;width:14px;height:14px"></div>
<div class="ov" style="top:193px;color:#00a8a8;letter-spacing:-0.25px">Overlay 2</div>
<div class="setb" style="top:209px">3</div>
<div class="chk" style="top:209px;width:14px;height:14px"></div>
<div class="ov" style="top:209px;color:#800080;letter-spacing:-0.25px">Overlay 3</div>
<div class="setb" style="top:225px">4</div>
<div class="chk" style="top:225px;width:14px;height:14px"></div>
<div class="ov" style="top:225px;color:#ff00ff;letter-spacing:-0.25px">Overlay 4</div>
<div class="setb" style="top:241px">5</div>
<div class="chk" style="top:241px;width:14px;height:14px"></div>
<div class="ov" style="top:241px;color:#804000;letter-spacing:-0.25px">Overlay 5</div>
<div class="setb" style="top:257px">6</div>
<div class="chk" style="top:257px;width:14px;height:14px"></div>
<div class="ov" style="top:257px;color:#ff8040;letter-spacing:-0.25px">Overlay 6</div>
<div class="setb" style="top:273px">C</div>
<div class="chk" style="top:273px;width:14px;height:14px"></div>
<div class="ov" style="top:273px;color:#000;letter-spacing:0.3px">Composite</div>
<div class="sp" style="left:1183px;top:290px;width:64px;height:17px;font-size:12px;line-height:17px;text-align:center">Options...</div>
<!-- floating windows -->
<div style="left:1162px;top:830px;width:120px;height:63px;background:#d4d0c8;box-shadow:inset 1px 1px #d4d0c8,inset -1px -1px #404040,inset 2px 2px #fff,inset -2px -2px #808080"></div>
<div style="left:1166px;top:834px;width:112px;height:18px;background:linear-gradient(to right,#808080,#c0c0c0)"></div>
<svg style="left:1168px;top:835px;width:16px;height:16px" viewBox="0 0 16 16"><rect x="0.5" y="0.5" width="15" height="15" fill="#fff" stroke="#000"/><path d="M2 8.500L5.500 5.300V10L10.500 5.300V10L13.500 7.300" fill="none" stroke="#303030" stroke-width="0.8"/></svg>
<div style="left:1186px;top:836px;font-size:11.500px;line-height:14px;font-weight:bold;color:#d4d0c8">Peak Frequ...</div>
<div class="cap" style="left:1260px;top:836px"><svg viewBox="0 0 16 14" shape-rendering="crispEdges"><path d="M4 3h2v1h1v1h2v-1h1v-1h2v1h-1v1h-1v1h-1v1h1v1h1v1h1v1h-2v-1h-1v-1h-2v1h-1v1h-2v-1h1v-1h1v-1h1v-1h-1v-1h-1v-1h-1z" fill="#000"/></svg></div>
<div style="left:1162px;top:856px;width:120px;height:0"><div style="left:-40px;top:0;width:200px;height:34px;text-align:center;font-size:30.700px;line-height:34px;transform:scaleX(0.708);-webkit-text-stroke:0.25px #000">500.98 Hz</div></div>
<div style="left:1161px;top:890px;width:120px;height:64px;background:#d4d0c8;box-shadow:inset 1px 1px #d4d0c8,inset -1px -1px #404040,inset 2px 2px #fff,inset -2px -2px #808080"></div>
<div style="left:1165px;top:894px;width:112px;height:18px;background:linear-gradient(to right,#808080,#c0c0c0)"></div>
<svg style="left:1167px;top:895px;width:16px;height:16px" viewBox="0 0 16 16"><rect x="0.5" y="0.5" width="15" height="15" fill="#fff" stroke="#000"/><path d="M2 8.500L5.500 5.300V10L10.500 5.300V10L13.500 7.300" fill="none" stroke="#303030" stroke-width="0.8"/></svg>
<div style="left:1185px;top:896px;font-size:11.500px;line-height:14px;font-weight:bold;color:#d4d0c8">Peak Ampli...</div>
<div class="cap" style="left:1259px;top:896px"><svg viewBox="0 0 16 14" shape-rendering="crispEdges"><path d="M4 3h2v1h1v1h2v-1h1v-1h2v1h-1v1h-1v1h-1v1h1v1h1v1h1v1h-2v-1h-1v-1h-2v1h-1v1h-2v-1h1v-1h1v-1h1v-1h-1v-1h-1v-1h-1z" fill="#000"/></svg></div>
<div style="left:1161px;top:916px;width:120px;height:0"><div style="left:-40px;top:0;width:200px;height:34px;text-align:center;font-size:30.700px;line-height:34px;transform:scaleX(0.708);-webkit-text-stroke:0.25px #000">-60.18 dB</div></div>
<!-- status bar -->
<div class="st" style="left:8px;width:118px">Running...</div>
<div class="st" style="left:128px;width:101px">Real Time</div>
<div class="st" style="left:231px;width:71px">96000 Hz</div>
<div class="st" style="left:304px;width:51px">24 Bit</div>
<div class="st" style="left:357px;width:61px">Mono</div>
<div class="st" style="left:420px;width:101px">FFT 65536 pts</div>
<div class="st" style="left:523px;width:73px">Hanning</div>
<div class="st" style="left:598px;width:683px"></div>
<div style="left:601px;top:976px;width:490px;height:14px;background:repeating-linear-gradient(to right,transparent 0 3px,#808080 3px 4px),linear-gradient(to right,#00ff00,#50e000 50%,#c4c400)"></div>

</div>
</body>
</html>
